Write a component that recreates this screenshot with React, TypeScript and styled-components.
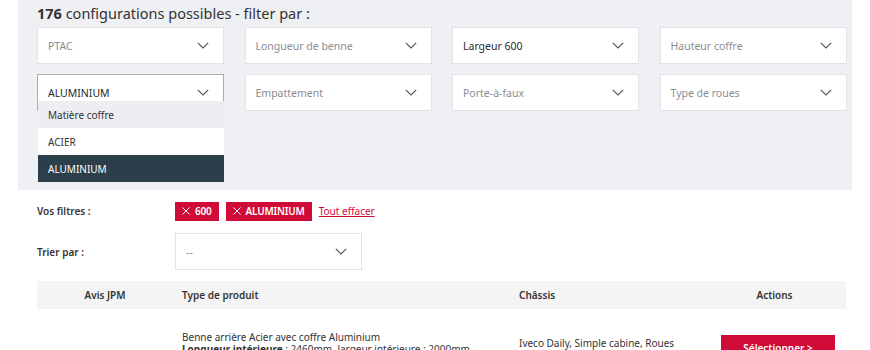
import React from 'react'
import styled, { createGlobalStyle } from 'styled-components'

const variables = {
  panelGray: '#eef0f3',
  borderGray: '#e1e3e8',
  textGray: '#8a8d93',
  textDark: '#2b2b2b',
  red: '#d10b38',
  navy: '#2c3e4a',
  headGray: '#f4f4f4'
}

const GlobalStyle = createGlobalStyle`
  body {
    margin: 0;
    background: #ffffff;
    font-family: 'Noto Sans', 'Open Sans', sans-serif;
    color: ${variables.textDark};
  }
`

const Page = styled.div`
  width: 870px;
  height: 350px;
  overflow: hidden;
  padding-left: 18px;
  box-sizing: border-box;
`
const Panel = styled.section`
  width: 834px;
  height: 190px;
  box-sizing: border-box;
  background-color: ${variables.panelGray};
  padding: 5px 6px 0 19px;
`
const Title = styled.h2`
  margin: 0 0 6px 0;
  font-size: 14.5px;
  font-weight: 400;
  line-height: 16px;
  color: #333;
  b {
    font-weight: 700;
  }
`
const Grid = styled.div`
  display: grid;
  grid-template-columns: repeat(4, 187px);
  column-gap: 20.5px;
  row-gap: 10px;
`
const SelectBox = styled.div<{ $active?: boolean; $width?: number }>`
  position: relative;
  display: flex;
  align-items: center;
  justify-content: space-between;
  height: 37px;
  width: ${p => (p.$width ? `${p.$width}px` : 'auto')};
  box-sizing: border-box;
  background: #ffffff;
  border: 1px solid ${p => (p.$active ? '#a9abae' : variables.borderGray)};
  padding: 0 14px 0 10px;
  font-size: 10.5px;
`
const SelectLabel = styled.span<{ $filled?: boolean }>`
  color: ${p => (p.$filled ? variables.textDark : variables.textGray)};
`
const Dropdown = styled.ul`
  position: absolute;
  top: 26px;
  left: 0;
  width: 186px;
  margin: 0;
  padding: 0;
  list-style: none;
  z-index: 5;
`
const Option = styled.li<{ $variant: 'head' | 'plain' | 'selected' }>`
  height: 27px;
  display: flex;
  align-items: center;
  padding-left: 10px;
  font-size: 10px;
  background: ${p =>
    p.$variant === 'head' ? '#eceef1' : p.$variant === 'selected' ? variables.navy : '#ffffff'};
  color: ${p => (p.$variant === 'selected' ? '#ffffff' : '#333')};
`
const Body = styled.div`
  padding: 11px 6px 0 19px;
`
const FormRow = styled.div<{ $height: number; $gap?: number }>`
  display: flex;
  align-items: center;
  height: ${p => p.$height}px;
  margin-top: ${p => p.$gap ?? 0}px;
`
const RowLabel = styled.span`
  width: 138px;
  font-size: 10px;
  font-weight: 600;
  color: #333;
`
const Chip = styled.span`
  display: inline-flex;
  align-items: center;
  gap: 5px;
  height: 19px;
  padding: 0 7px;
  margin-right: 7px;
  background: ${variables.red};
  color: #ffffff;
  font-size: 10px;
  font-weight: 600;
  letter-spacing: -0.2px;
`
const ClearLink = styled.a`
  color: ${variables.red};
  font-size: 10px;
  text-decoration: underline;
`
const Table = styled.div`
  margin-top: 11px;
  width: 809px;
`
const TableHead = styled.div`
  display: grid;
  grid-template-columns: 136px 346px 184px 143px;
  align-items: center;
  height: 28px;
  background: ${variables.headGray};
  font-size: 10px;
  font-weight: 600;
  color: #333;
`
const TableRow = styled.div`
  display: grid;
  grid-template-columns: 136px 346px 184px 143px;
  padding-top: 22px;
  font-size: 10px;
  color: #333;
  line-height: 12px;
`
const Cell = styled.div<{ $center?: boolean; $pad?: number; $top?: number }>`
  text-align: ${p => (p.$center ? 'center' : 'left')};
  padding-left: ${p => p.$pad ?? 0}px;
  padding-top: ${p => p.$top ?? 0}px;
`
const SelectButton = styled.button`
  margin: 4px 0 0 18px;
  width: 114px;
  height: 26px;
  border: none;
  background: ${variables.red};
  color: #ffffff;
  font-family: 'Noto Sans', sans-serif;
  font-size: 10px;
  font-weight: 600;
  align-self: start;
`

const Chevron = () => (
  <svg width="12" height="7" viewBox="0 0 12 7" fill="none">
    <path d="M0.8 0.8L6 6L11.2 0.8" stroke="#555" strokeWidth="1.2" />
  </svg>
)

const Cross = () => (
  <svg width="8" height="8" viewBox="0 0 8 8">
    <path d="M0.5 0.5L7.5 7.5M7.5 0.5L0.5 7.5" stroke="#ffffff" strokeWidth="1" />
  </svg>
)

const filters = [
  { label: 'PTAC' },
  { label: 'Longueur de benne' },
  { label: 'Largeur 600', filled: true },
  { label: 'Hauteur coffre' },
  { label: 'ALUMINIUM', filled: true, open: true },
  { label: 'Empattement' },
  { label: 'Porte-à-faux' },
  { label: 'Type de roues' }
]

const App: React.FC = () => {
  return (
    <Page>
      <GlobalStyle />
      <Panel>
        <Title>
          <b>176</b> configurations possibles - filter par :
        </Title>
        <Grid>
          {filters.map(f => (
            <SelectBox key={f.label} $active={f.open}>
              <SelectLabel $filled={f.filled}>{f.label}</SelectLabel>
              <Chevron />
              {f.open && (
                <Dropdown>
                  <Option $variant="head">Matière coffre</Option>
                  <Option $variant="plain">ACIER</Option>
                  <Option $variant="selected">ALUMINIUM</Option>
                </Dropdown>
              )}
            </SelectBox>
          ))}
        </Grid>
      </Panel>
      <Body>
        <FormRow $height={20}>
          <RowLabel>Vos filtres :</RowLabel>
          <Chip>
            <Cross /> 600
          </Chip>
          <Chip>
            <Cross /> ALUMINIUM
          </Chip>
          <ClearLink href="#">Tout effacer</ClearLink>
        </FormRow>
        <FormRow $height={37} $gap={12}>
          <RowLabel>Trier par :</RowLabel>
          <SelectBox $width={187}>
            <SelectLabel>--</SelectLabel>
            <Chevron />
          </SelectBox>
        </FormRow>
        <Table>
          <TableHead>
            <Cell $center>Avis JPM</Cell>
            <Cell $pad={9}>Type de produit</Cell>
            <Cell>Châssis</Cell>
            <Cell $center>Actions</Cell>
          </TableHead>
          <TableRow>
            <Cell />
            <Cell $pad={9}>
              Benne arrière Acier avec coffre Aluminium
              <br />
              <b>Longueur intérieure</b> : 2460mm, largeur intérieure : 2000mm
            </Cell>
            <Cell $top={6}>Iveco Daily, Simple cabine, Roues</Cell>
            <SelectButton>Sélectionner &gt;</SelectButton>
          </TableRow>
        </Table>
      </Body>
    </Page>
  )
}

export default App
